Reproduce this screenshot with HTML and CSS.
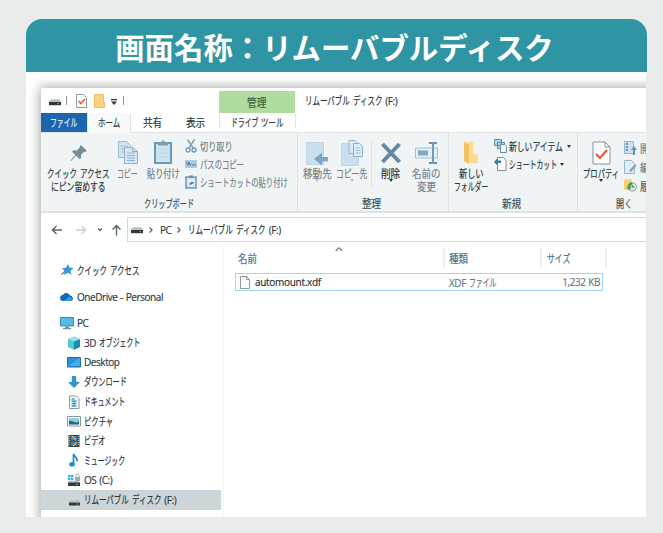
FILE: index.html
```html
<!DOCTYPE html>
<html lang="ja">
<head>
<meta charset="utf-8">
<title>リムーバブルディスク</title>
<link rel="stylesheet" href="styles.css">
</head>
<body>
<svg class="defs" width="0" height="0">
  <symbol id="drive" viewBox="0 0 13 8"><path d="M2 1h9l2 3H0z" fill="#b9c0c2"/><path d="M0 4h13v3.5H0z" fill="#30373a"/><path d="M9 5h2v1.3H9z" fill="#4caf50"/></symbol>
  <symbol id="doc" viewBox="0 0 19 24"><path d="M1 1h12l5 5v17H1z" fill="#fafcfd" stroke="#839399"/><path d="M13 1v5h5" fill="none" stroke="#839399"/><path d="M4 13l4 4 7-8" fill="none" stroke="#f05a32" stroke-width="2.2"/></symbol>
  <symbol id="folder" viewBox="0 0 16 22"><path d="M1 0h9v12h5v9H6L1 18z" fill="#ffdc8c"/><path d="M1 0l5 3v19l-5-3z" fill="#f3c36a"/></symbol>
</svg>
<main class="card">
  <h1 class="title">画面名称：リムーバブルディスク</h1>
  <div class="stage">
    <div class="window">
      <div class="titlebar">
        <svg class="tb-drive" width="12" height="8"><use href="#drive"/></svg>
        <i class="bar"></i>
        <svg class="tb-check" width="11" height="14" viewBox="0 0 11 14"><path d="M.5.5h7l3 3v10H.5z" fill="#fff" stroke="#8b999e"/><path d="M2.5 7l2.300 2.500L9 5" fill="none" stroke="#ec5a38" stroke-width="1.700"/></svg>
        <svg class="tb-folder" width="11" height="14" viewBox="0 0 11 14"><path d="M.5.5h9v8h1v5H.5z" fill="#fbd37f" stroke="#edbf63"/></svg>
        <svg class="tb-more" width="6" height="6" viewBox="0 0 6 6"><path d="M0 0h6v1.200H0zM0 2.500h6L3 6z" fill="#333"/></svg>
        <i class="bar"></i>
        <span class="manage"><b class="k s95 n2">管理</b></span>
        <span class="caption"><b class="k n6">リムーバブル</b> <b class="k n4">ディスク</b> (F:)</span>
      </div>
      <nav class="tabs">
        <span class="tab file"><b class="k s62 n4">ファイル</b></span>
        <span class="tab home"><b class="k n3">ホーム</b></span>
        <span class="tab share"><b class="k s90 n2">共有</b></span>
        <span class="tab view"><b class="k s90 n2">表示</b></span>
        <span class="tab tools"><b class="k s62 n4">ドライブ</b> <b class="k n3">ツール</b></span>
      </nav>
      <div class="ribbon">
        <section class="group clip">
          <div class="tools-row">
            <div class="btn pin"><svg width="18" height="18" viewBox="0 0 18 18"><path d="M11 1l6 6-2 1-1-.3-3 3 .2 3-1.700 1.500-3.300-3.400L1 17l-.5-.5L5.400 11 2 7.800l1.800-1.600 3 .3 3-3L10 2z" fill="#758e9b"/></svg>
              <span><b class="k n4">クイック</b> <b class="k n4">アクセス</b></span><span><b class="k s70 n7">にピン留めする</b></span></div>
            <div class="btn copy dim"><svg width="20" height="24" viewBox="0 0 20 24"><path d="M.5 1.500h8l4 4v12H.5z" fill="#d3e4f0" stroke="#9bbbd1"/><path d="M3 6h7M3 9h7M3 12h7" stroke="#9fc0d7"/><path d="M6.500 7.500h8l5 4v12h-13z" fill="#d6e7f3" stroke="#8fb3cc"/><path d="M14.500 7.500v4h5M9 13h8M9 15.500h8M9 18h8M9 20.500h8" fill="none" stroke="#8cb1cc"/></svg>
              <span><b class="k s62 n3">コピー</b></span></div>
            <div class="btn paste dim"><svg width="18" height="24" viewBox="0 0 18 24"><path d="M1 3h16v20H1z" fill="#cfe2ef" stroke="#6d99b9" stroke-width="2"/><path d="M4 2.500h3l1-2h2l1 2h3v3H4z" fill="#7c9db2"/><path d="M4 9h10M4 13h10M4 17h10" stroke="#bdd4e4"/></svg>
              <span><b class="k s75 n4">貼り付け</b></span></div>
            <ul class="small dim">
              <li><svg width="12" height="14" viewBox="0 0 12 14"><path d="M2.500.5L8 9M9.500.5L4 9" stroke="#7e9fb4" stroke-width="1.500"/><circle cx="3" cy="11" r="2" fill="none" stroke="#6b97b6" stroke-width="1.300"/><circle cx="9" cy="11" r="2" fill="none" stroke="#6b97b6" stroke-width="1.300"/></svg><b class="k s75 n4">切り取り</b></li>
              <li><svg width="12" height="8" viewBox="0 0 12 8"><path d="M0 0h12v8H0z" fill="#aecbdd"/><path d="M1.500 2l1.200 3.500L4 2l1.200 3.500L6 3.500M7 5h4" fill="none" stroke="#557f9c"/></svg><b class="k s66 n6">パスのコピー</b></li>
              <li><svg width="12" height="14" viewBox="0 0 12 14"><path d="M1 2h10v11H1z" fill="#d5e6f2" stroke="#6c9aba" stroke-width="1.500"/><path d="M4 .5h4v2.500H4z" fill="#6990aa"/><path d="M3.500 5h5v5h-5z" fill="#fff"/><path d="M4.500 10V7.500h2V6L9 8 6.500 9.500" fill="#4777a0"/></svg><b class="k s66 n12">ショートカットの貼り付け</b></li>
            </ul>
          </div>
          <footer><b class="k s65 n7">クリップボード</b></footer>
        </section>
        <section class="group organize">
          <div class="tools-row">
            <div class="btn move dim"><svg width="22" height="24" viewBox="0 0 22 24"><path d="M.5.500h17v22H.5z" fill="#c9dfee" stroke="#bed5e4"/><path d="M22 15h-6v-4.500L8 17l8 6.500V19.500h6z" fill="#7fa6c1"/></svg>
              <span><b class="k s90 n3">移動先</b></span><i class="caret pale"></i></div>
            <div class="btn copyto dim"><svg width="22" height="26" viewBox="0 0 22 26"><path d="M.5 3.500h17v22H.5z" fill="#c9dfee" stroke="#bed5e4"/><path d="M8 .500h6l2 2v11H8z" fill="#dceaf4" stroke="#94b7ce"/><path d="M12.500 3.500h6l3 3v10h-9z" fill="#e0edf5" stroke="#89aec8"/><path d="M14.500 8h5M14.500 10.500h5M14.500 13h5" stroke="#9dbdd1"/></svg>
              <span><b class="k s70 n4">コピー先</b></span><i class="caret pale"></i></div>
            <i class="divider"></i>
            <div class="btn delete"><svg width="22" height="22" viewBox="0 0 22 22"><path d="M2.500 2L19.500 20M19.500 2L2.500 20" stroke="#6588a6" stroke-width="4"/></svg>
              <span><b class="k s90 n2">削除</b></span><i class="caret"></i></div>
            <div class="btn rename dim"><svg width="23" height="22" viewBox="0 0 23 22"><path d="M.5 6h22v10H.5z" fill="#e4eff6" stroke="#a4c1d4"/><path d="M3 8.500h10v5H3z" fill="#7fa7c5"/><path d="M14 1h3l1 1 1-1h3M18 2v18M14 21h3l1-1 1 1h3" fill="none" stroke="#6d90aa" stroke-width="1.800"/></svg>
              <span><b class="k s85 n3">名前の</b></span><span><b class="k s85 n2">変更</b></span></div>
          </div>
          <footer><b class="k s90 n2">整理</b></footer>
        </section>
        <section class="group create">
          <div class="tools-row">
            <div class="btn newfolder"><svg width="16" height="22"><use href="#folder"/></svg>
              <span><b class="k s75 n3">新しい</b></span><span><b class="k s62 n5">フォルダー</b></span></div>
            <ul class="small">
              <li><svg width="13" height="14" viewBox="0 0 13 14"><path d="M.5.5h7v6h-7zM3.500 3.500h7v6h-7z" fill="#a9d6e8" stroke="#5a93ad"/><path d="M6.500 5.500h4l2 2v6h-6z" fill="#f4f9fb" stroke="#718e9d"/></svg><b class="k s70 n7">新しいアイテム</b><i class="caret"></i></li>
              <li><svg width="13" height="14" viewBox="0 0 13 14"><path d="M3.500.5h6l2.500 3v10H3.500z" fill="#fafcfd" stroke="#7e949e"/><path d="M0 7l3.500-4v2.500H7V8H3.500v2.500z" transform="translate(0 -2)" fill="#3e7fa2"/></svg><b class="k s62 n7">ショートカット</b><i class="caret"></i></li>
            </ul>
          </div>
          <footer><b class="k s90 n2">新規</b></footer>
        </section>
        <section class="group open">
          <div class="tools-row">
            <div class="btn props"><svg width="19" height="24"><use href="#doc"/></svg>
              <span><b class="k s66 n5">プロパティ</b></span><i class="caret"></i></div>
            <ul class="small">
              <li class="dim"><svg width="13" height="14" viewBox="0 0 13 14"><path d="M.5.5h9v12h-9z" fill="#cce0ed" stroke="#94b6cb"/><path d="M2 3h2M2 6h2M2 9h2" stroke="#4f83a8" stroke-width="1.500"/><path d="M9 14V9H7l3-4 3 4h-2v5z" fill="#6395b7"/></svg><b class="k s90 n2">開く</b></li>
              <li class="dim"><svg width="13" height="14" viewBox="0 0 13 14"><path d="M.5.5h7l3 3v10H.5z" fill="#e0ecf4" stroke="#94b6cb"/><path d="M5 11l6-7 1.500 1.500L7 12z" fill="#76a2bf"/></svg><b class="k s90 n2">編集</b></li>
              <li><svg width="13" height="13" viewBox="0 0 14 13"><path d="M0 0h8v11H0z" fill="#f7cf75"/><circle cx="9" cy="8" r="4.500" fill="#d4e6d7" stroke="#8ca596"/><path d="M9 3a5 5 0 0 0-5 5H2.500L5.500 12 8 8H6.500L9 5z" fill="#3aa350"/><path d="M9 6v2h2" fill="none" stroke="#555"/></svg><b class="k s90 n2">履歴</b></li>
            </ul>
          </div>
          <footer><b class="k s75 n2">開く</b></footer>
        </section>
      </div>
      <div class="address">
        <svg width="76" height="14" viewBox="0 0 76 14" fill="none" stroke="#56656b" stroke-width="1.400"><path d="M11 7H1.500M5.500 3l-4 4 4 4"/><path d="M25 7h9.500M30.500 3l4 4-4 4" stroke="#cbd0d2"/><path d="M47 5.500l2 2 2-2"/><path d="M65.500 12.500V2.500M61.500 6.500l4-4 4 4"/></svg>
        <div class="path">
          <svg width="12" height="8" viewBox="0 0 13 8"><use href="#drive"/></svg>
          <svg class="chev" width="4" height="6" viewBox="0 0 4 6"><path d="M.5.5L3 3 .5 5.500" fill="none" stroke="#56656b" stroke-width="1.300"/></svg>
          <span class="pc">PC</span>
          <svg class="chev" width="4" height="6" viewBox="0 0 4 6"><path d="M.5.5L3 3 .5 5.500" fill="none" stroke="#56656b" stroke-width="1.300"/></svg>
          <span class="here"><b class="k n6">リムーバブル</b> <b class="k n4">ディスク</b> (F:)</span>
        </div>
      </div>
      <div class="body">
        <aside class="side">
          <div class="row top quick"><svg width="14" height="14" viewBox="0 0 14 14"><path d="M8 1l1.500 3.600 4 .4-3 2.800 1 4.200-3.500-2.200L4 12l.8-3.800L2 5.200l4-.5z" fill="#349bd5"/><path d="M1.500 11.500l4-3.500" stroke="#71838c" stroke-width="1.500"/></svg><span><b class="k n4">クイック</b> <b class="k n4">アクセス</b></span></div>
          <div class="row top one"><svg width="14" height="14" viewBox="0 0 14 14"><path d="M3.500 11a3 3 0 0 1-.7-6A4 4 0 0 1 10 5.500a3 3 0 0 1 1.500 5.500z" fill="#1265b8"/><path d="M3 11l6.500-4.500a3 3 0 0 1 2 4.500z" fill="#2c9de5"/></svg><span>OneDrive - Personal</span></div>
          <div class="row top pcrow"><svg width="14" height="14" viewBox="0 0 14 14"><path d="M.5 1.500h13v8.500H.5z" fill="#56b9e6" stroke="#438da9"/><path d="M5 10.500h4v1.500h2v1.200H3V12h2z" fill="#71929f"/></svg><span>PC</span></div>
          <div class="row"><svg width="14" height="14" viewBox="0 0 14 14"><path d="M1 3l6-2.500L13 3v8l-6 2.700L1 11z" fill="#55c3db"/><path d="M7 5.500L13 3v8l-6 2.700z" fill="#168fae"/><path d="M1 3l6-2.500L13 3 7 5.500z" fill="#9be1ea"/></svg><span>3D <b class="k s62 n6">オブジェクト</b></span></div>
          <div class="row"><svg width="14" height="14" viewBox="0 0 14 14"><path d="M.5 2.500h13v9.500H.5z" fill="#2794dc" stroke="#2271a6"/><path d="M1 11L13 3v8z" fill="#48aceb"/></svg><span>Desktop</span></div>
          <div class="row"><svg width="14" height="14" viewBox="0 0 14 14"><path d="M4.800 1h4.400v6H13l-6 6-6-6h3.800z" fill="#3691ce"/></svg><span><b class="k s65 n6">ダウンロード</b></span></div>
          <div class="row"><svg width="14" height="14" viewBox="0 0 14 14"><path d="M2.500 1h7l2.500 2.500v10H2.500z" fill="#fafafa" stroke="#87969d"/><path d="M4.500 4h3M4.500 6h5M4.500 8.500h5M4.500 11h5M7 6v5" stroke="#429cc2" stroke-width="1.300"/></svg><span><b class="k s62 n6">ドキュメント</b></span></div>
          <div class="row"><svg width="14" height="14" viewBox="0 0 14 14"><path d="M.5 2.500h13v9.500H.5z" fill="#fff" stroke="#87969d"/><path d="M2 4h10v6.500H2z" fill="#8dcced"/><path d="M2 6.500l4 1 3 1 3-1v3H2z" fill="#2c6775"/></svg><span><b class="k s66 n4">ピクチャ</b></span></div>
          <div class="row"><svg width="14" height="14" viewBox="0 0 14 14"><path d="M1.500 1h11v12h-11z" fill="#3b4145"/><path d="M4 2h6v4.500H4z" fill="#3288cf"/><path d="M4 7.500h6V12H4z" fill="#337fb6"/><path d="M5 2l4 4M6 12l4-4" stroke="#e6a33c" stroke-width="1.500"/><path d="M2.700 2v10M11.300 2v10" stroke="#cbd1d4" stroke-dasharray="1 1"/></svg><span><b class="k s65 n3">ビデオ</b></span></div>
          <div class="row"><svg width="14" height="14" viewBox="0 0 14 14"><ellipse cx="5" cy="11.300" rx="2.800" ry="2.300" fill="#208dcc"/><path d="M6.500 11V.8c.5 3 4.500 3.300 3.500 7.500" fill="none" stroke="#208dcc" stroke-width="1.700"/></svg><span><b class="k s62 n6">ミュージック</b></span></div>
          <div class="row"><svg width="14" height="14" viewBox="0 0 14 14"><path d="M1 2h2.300v2.300H1zM4 2h2.300v2.300H4zM1 5h2.300v2.300H1zM4 5h2.300v2.300H4z" fill="#25afe4"/><path d="M2 8h10l1 2H1z" fill="#bac2c5"/><path d="M1 9.500h12v3.500H1z" fill="#30393c"/><path d="M9 11h2v1H9z" fill="#54be57"/><path d="M8 4h5v4H8z" fill="#a2acb0"/><path d="M9 4V2.500a1.500 1.500 0 0 1 3 0V4" fill="none" stroke="#a2acb0"/></svg><span>OS (C:)</span></div>
          <div class="row selected"><svg width="14" height="14" viewBox="0 0 14 14"><path d="M3 7h9l1 2.500H2z" fill="#bac2c5"/><path d="M2 9.500h11v3H2z" fill="#30393c"/><path d="M9.500 10.500h2v1h-2z" fill="#54be57"/></svg><span><b class="k n6">リムーバブル</b> <b class="k n4">ディスク</b> (F:)</span></div>
        </aside>
        <div class="files">
          <svg class="sort" width="8" height="5" viewBox="0 0 8 5"><path d="M.7 4L4 .8 7.300 4" fill="none" stroke="#6b7c83" stroke-width="1.200"/></svg>
          <div class="heads"><span class="c-name"><b class="k s85 n2">名前</b></span><span class="c-type"><b class="k s85 n2">種類</b></span><span class="c-size"><b class="k s70 n3">サイズ</b></span></div>
          <div class="file-row"><svg width="10" height="13" viewBox="0 0 10 13"><path d="M.5.500h6l3 3v9h-9z" fill="#fafbfb" stroke="#929b9f"/><path d="M6.500.5v3h3" fill="none" stroke="#929b9f"/></svg><span class="name">automount.xdf</span><span class="type">XDF <b class="k s62 n4">ファイル</b></span><span class="size">1,232 KB</span></div>
        </div>
      </div>
    </div>
  </div>
</main>
</body>
</html>
```
FILE: styles.css
```css
* { box-sizing: border-box; }
body {
  margin: 0;
  height: 533px;
  overflow: hidden;
  background: #eaeceb;
  color: #2a373d;
  font: 10px/12px "Open Sans", "Noto Sans CJK JP", sans-serif;
  letter-spacing: -.44px;
  word-spacing: .6px;
  -webkit-text-stroke: .15px currentColor;
}
svg { display: block; flex: none; }
.defs { position: absolute; }
ul { list-style: none; margin: 0; padding: 0; }

/* Condensed Japanese runs: --n is the number of full-width characters */
.k {
  --s: .68;
  display: inline-block;
  width: calc(var(--n) * var(--s) * 1em);
  font-size: 11px;
  font-weight: 400;
  font-family: "Noto Sans CJK JP", sans-serif;
  letter-spacing: 0;
  line-height: 12px;
  white-space: nowrap;
  text-align: left;
  -webkit-text-stroke: .2px currentColor;
  transform: scaleX(var(--s));
  transform-origin: 0 50%;
}
.s62 { --s: .625; } .s65 { --s: .65; } .s66 { --s: .665; } .s70 { --s: .71; }
.s75 { --s: .74; } .s85 { --s: .86; } .s90 { --s: .87; } .s95 { --s: .88; }
.n2 { --n: 2; } .n3 { --n: 3; } .n4 { --n: 4; } .n5 { --n: 5; } .n6 { --n: 6; }
.n7 { --n: 7; } .n12 { --n: 12; }

.card { width: 621px; margin: 19px 0 0 26px; }
.title {
  height: 53px;
  margin: 0;
  border-radius: 16px 16px 0 0;
  background: #2f95a5;
  color: #fffffc;
  font: 700 29.4px/54px "Noto Sans CJK JP", sans-serif;
  letter-spacing: 0;
  text-align: center;
  white-space: nowrap;
  padding-right: 4px;
  -webkit-text-stroke: 0;
}
.stage { width: 620px; height: 445px; padding: 16px 0 0 15px; background: #fff; overflow: hidden; }
.window { width: 640px; height: 460px; background: #fff; box-shadow: 0 0 11px 1px rgba(70, 85, 80, .5); }

.titlebar { display: flex; height: 25px; align-items: center; }
.tb-drive { margin: 3px 5px 0 8px; }
.bar { width: 1px; height: 9px; background: #8b9599; }
.tb-check { margin: 1px 7px 0 9px; }
.tb-folder { margin-top: 1px; }
.tb-more { margin: 3px 6px 0; }
.manage { width: 76px; height: 22px; margin: 3px 0 0 95px; padding-top: 5px; background: #b0dd9f; text-align: center; color: #3f5f3f; }
.caption { margin-left: 10px; white-space: nowrap; }

.tabs { display: flex; height: 20px; line-height: 19px; border-bottom: 1px solid #dfe4e6; }
.tab { text-align: center; white-space: nowrap; }
.tab .k { line-height: 19px; }
.file { width: 46px; height: 19px; background: #1c66ae; color: #e2f0fa; }
.home { width: 44px; height: 20px; background: #f8fafa; border: solid #dfe4e6; border-width: 0 1px; }
.share { width: 44px; }
.view { width: 42px; }
.tools { width: 77px; height: 15px; margin-left: 2px; border: solid #dfe4e6; border-width: 0 1px; }

.ribbon { display: flex; height: 80px; background: #f0f4f5; border-bottom: 2px solid #dde2e4; }
.group { flex: none; padding-top: 6px; }
.clip { width: 256px; }
.organize { width: 151px; }
.create { width: 129px; }
.open { width: 104px; }
.group + .group { border-left: 1px solid #dce2e4; }
.tools-row { display: flex; height: 58px; }
.group footer { text-align: center; height: 12px; color: #3f4f56; }
.organize footer, .create footer { padding-right: 3px; }
.open footer { width: 92px; }
.btn { display: flex; flex-direction: column; align-items: center; flex: none; white-space: nowrap; }
.btn > span { line-height: 12px; height: 12px; }
.btn > span + span { margin-top: .5px; }
.dim { color: #74828a; }
.pin { width: 75px; }
.pin svg { margin: 5px 0; }
.copy { width: 23px; }
.copy svg { margin: 1px 0 3px; }
.paste { width: 48px; }
.paste svg { margin: 1px 0 3px; }
.move { width: 38px; }
.move svg { margin: 3px 0 1px; }
.copyto { width: 31px; }
.copyto svg { margin: 1px 0; }
.divider { width: 1px; height: 45px; margin: 3px 2px 0 4px; background: #dce2e4; }
.delete { width: 34px; }
.delete svg { margin: 3px 0; }
.rename { width: 36px; }
.rename svg { margin: 3px 0; }
.newfolder { width: 44px; }
.newfolder svg { margin: 3px 0; }
.props { width: 46px; }
.props svg { margin: 2px 0; }
.small { margin-top: -2px; }
.small li { display: flex; align-items: center; gap: 3px; height: 18px; white-space: nowrap; }
.clip .small { margin-left: -2px; }
.create .small { margin-left: 1px; }
.create .small li { gap: 2px; }
.open .small { margin-top: -1px; color: #536168; }
.open .small li { height: 19px; }
.caret { width: 0; height: 0; border: 2.5px solid transparent; border-top: 3px solid #333; border-bottom: 0; flex: none; }
.small .caret { margin-left: 1px; }
.pale { border-top-color: #b4c0c5; }

.address { display: flex; height: 32px; padding-top: 4px; }
.address > svg { margin: 6px 0 0 10px; }
.path { display: flex; flex: 1; align-items: center; height: 25px; border: 1px solid #d4d9db; padding-left: 3px; white-space: nowrap; }
.chev { margin: 0 0 0 6px; }
.pc { margin-left: 7px; }
.here { margin-left: 7px; }

.body { display: flex; height: 280px; }
.side { width: 183px; padding-top: 15.5px; border-right: 1px solid #f4f5f6; }
.row { display: flex; align-items: center; gap: 3px; width: 180px; height: 19.65px; padding-left: 26px; white-space: nowrap; }
.top { padding-left: 19px; }
.one, .pcrow { margin-top: 6.7px; }
.selected { background: #ced5d8; }
.files { width: 372px; margin-left: 11px; padding-top: 2px; }
.sort { margin-left: 100px; }
.heads { display: flex; height: 20px; margin-top: -4px; color: #4d7388; line-height: 20px; }
.heads span { border-right: 2px solid #eceff0; }
.heads .k { line-height: 21px; }
.c-name { width: 210px; padding-left: 3px; }
.c-type { width: 97px; padding-left: 4px; }
.c-size { width: 65px; padding-left: 5px; }
.file-row { display: flex; align-items: center; width: 368px; height: 18px; margin-top: 5px; border: 1px solid #99d9f5; padding: 0 2px 0 4px; white-space: nowrap; }
.name { width: 199px; padding-left: 5px; color: #202d33; letter-spacing: -.3px; }
.type { width: 90px; color: #66767d; }
.size { flex: 1; text-align: right; color: #66767d; }
```
